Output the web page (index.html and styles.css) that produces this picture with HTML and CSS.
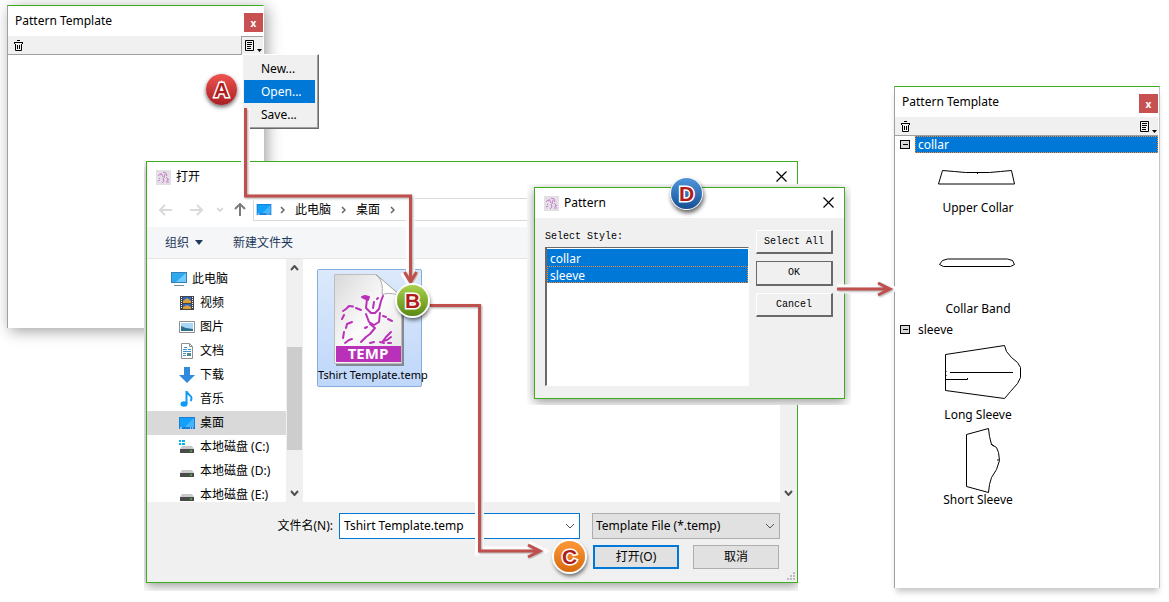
FILE: index.html
```html
<!DOCTYPE html>
<html lang="zh-CN">
<head>
  <meta charset="UTF-8" />
  <title>Pattern Template</title>
  <link rel="stylesheet" href="styles.css">
</head>
<body>
  <!-- shared icons -->
  <svg class="sprite" width="0" height="0" aria-hidden="true">
    <symbol id="i-trash" viewBox="0 0 11 11">
      <path d="M1 2.500h9M4 .5h3M2.500 4v6.500h6V4M4.500 5v4M6.500 5v4M1.500 2v2M9.500 2v2" fill="none" stroke="#000"/>
    </symbol>
    <symbol id="i-list" viewBox="0 0 18 13">
      <path d="M1.500 1.500h8v10h-8zM3 3.500h5M3 5.500h5M3 7.500h4M3 9.500h4" fill="none" stroke="#000"/>
      <path d="M13 10h5l-2.500 3z"/>
    </symbol>
    <symbol id="i-close" viewBox="0 0 11 11">
      <path d="M.5.5l10 10M10.500.5l-10 10" fill="none" stroke="#000" stroke-width="1.200"/>
    </symbol>
    <symbol id="i-app" viewBox="0 0 15 15">
      <path d="M0 0h15v15H0z" fill="#e2e0e4"/>
      <path d="M2 11l2-1M2 6l2-2 1 1M4 8l-1 1M5 3l2 4M7 2l3 1 1 3M9 4l-1 4M7 8l1 3-2 2M10 7l2 2-1 2M10 12h3M12 9l1 1" fill="none" stroke="#cb7dd0"/>
    </symbol>
    <symbol id="i-chev" viewBox="0 0 5 8">
      <path d="M1 1l3 3-3 3" fill="none" stroke="#666" stroke-width="1.500"/>
    </symbol>
    <symbol id="i-desktop" viewBox="0 0 16 12">
      <path d="M0 0h16v12H0z" fill="#1a7fd4"/>
      <path d="M1 1h14v9H1z" fill="#12a0fb"/>
      <path d="M15 1v9H6z" fill="#45b5ff"/>
      <path d="M1 11h2M11 11h1M13 11h1" stroke="#fff"/>
    </symbol>
    <symbol id="i-disk" viewBox="0 0 16 16">
      <path d="M3 7h10l2 3H1z" fill="#c9c9c9"/>
      <path d="M1 10h14v4H1z" fill="#4a4a4a"/>
      <path d="M11 12h2" stroke="#3df03d"/>
    </symbol>
  </svg>

  <main class="desktop">
    <section class="window panel panel-empty">
      <header class="panel-title">
        <h2>Pattern Template</h2>
        <button class="panel-close" aria-label="Close">x</button>
      </header>
      <div class="panel-tools">
        <button class="tool" aria-label="Delete"><svg width="11" height="11"><use href="#i-trash"/></svg></button>
        <button class="tool tool-menu pressed" aria-label="Menu"><svg width="18" height="13"><use href="#i-list"/></svg></button>
      </div>
      <div class="panel-body"></div>
    </section>

    <div class="popup" role="menu">
      <button role="menuitem">New...</button>
      <button role="menuitem" class="active">Open...</button>
      <button role="menuitem">Save...</button>
    </div>

    <div class="frame frame-open">
      <section class="window dialog">
        <header class="dialog-title">
          <svg width="15" height="15"><use href="#i-app"/></svg>
          <h2>打开</h2>
          <button class="dialog-close" aria-label="Close"><svg width="11" height="11"><use href="#i-close"/></svg></button>
        </header>

        <nav class="address-row">
          <button class="nav-btn" aria-label="Back"><svg width="14" height="12" viewBox="0 0 14 12"><path d="M13 6H1M6 1L1 6l5 5" fill="none" stroke="#dadada" stroke-width="2"/></svg></button>
          <button class="nav-btn" aria-label="Forward"><svg width="14" height="12" viewBox="0 0 14 12"><path d="M1 6h12M8 1l5 5-5 5" fill="none" stroke="#dadada" stroke-width="2"/></svg></button>
          <button class="nav-btn" aria-label="Recent"><svg width="6" height="5" viewBox="0 0 6 5"><path d="M0 1l3 3 3-3" fill="none" stroke="#cfcfcf" stroke-width="1.500"/></svg></button>
          <button class="nav-btn" aria-label="Up"><svg width="12" height="13" viewBox="0 0 12 13"><path d="M6 13V1M1 6l5-5 5 5" fill="none" stroke="#7b7b7b" stroke-width="2"/></svg></button>
          <div class="address">
            <svg width="16" height="11"><use href="#i-desktop"/></svg>
            <svg width="5" height="8"><use href="#i-chev"/></svg>
            <a href="#pc">此电脑</a>
            <svg width="5" height="8"><use href="#i-chev"/></svg>
            <a href="#desktop">桌面</a>
            <svg width="5" height="8"><use href="#i-chev"/></svg>
          </div>
        </nav>

        <div class="commands">
          <button>组织 <svg width="8" height="5" viewBox="0 0 8 5"><path d="M0 0h8L4 5z" fill="#1e395b"/></svg></button>
          <button>新建文件夹</button>
        </div>

        <div class="browser">
          <ul class="tree">
            <li class="root"><a href="#pc">
              <svg width="16" height="16" viewBox="0 0 16 16"><path d="M0 1h16v11H0z" fill="#3580b5"/><path d="M1 2h14v9H1z" fill="#2fa9ee"/><path d="M15 2v9H5z" fill="#71caff"/><path d="M3 14.500h10" stroke="#6d8da3"/></svg>
              此电脑</a></li>
            <li><a href="#videos">
              <svg width="16" height="16" viewBox="0 0 16 16"><path d="M1 1h14v14H1z" fill="#444"/><path d="M4 2h8v6H4z" fill="#2f67c8"/><path d="M4 9h8v5H4z" fill="#2f67c8"/><path d="M4 6l4-3 4 3v2H4zM4 12l4-2 4 2v2H4z" fill="#d8a03a"/><path d="M2.500 2v12M13.500 2v12" stroke="#fff" stroke-dasharray="1 1"/></svg>
              视频</a></li>
            <li><a href="#pictures">
              <svg width="16" height="16" viewBox="0 0 16 16"><path d="M.5 2.500h15v11H.5z" fill="#fff" stroke="#8f8f8f"/><path d="M2 4h12v8H2z" fill="#a9d6f5"/><path d="M2 7l5 2 7 1v2H2z" fill="#2d6f8f"/></svg>
              图片</a></li>
            <li><a href="#documents">
              <svg width="16" height="16" viewBox="0 0 16 16"><path d="M2.500.5h8l3 3v12h-11z" fill="#fff" stroke="#8f8f8f"/><path d="M10.500.5v3h3" fill="none" stroke="#8f8f8f"/><path d="M4 6.500h4M9 6.500h3M4 8.500h8M4 10.500h3M4 12.500h3M5 4.500h3" stroke="#3b92d2"/><path d="M8 10h4v3H8z" fill="#4e8a8a"/></svg>
              文档</a></li>
            <li><a href="#downloads">
              <svg width="16" height="16" viewBox="0 0 16 16"><path d="M5 0h6v8h5l-8 8-8-8h5z" fill="#2f8ade"/></svg>
              下载</a></li>
            <li><a href="#music">
              <svg width="16" height="16" viewBox="0 0 16 16"><ellipse cx="5" cy="13" rx="3.500" ry="2.700" fill="#0f9bf5"/><path d="M7.500 13V0c1 4 5 4 5 7 0 2-1 3-1 3" fill="none" stroke="#0f9bf5" stroke-width="2"/></svg>
              音乐</a></li>
            <li class="selected"><a href="#desktop">
              <svg width="16" height="12"><use href="#i-desktop"/></svg>
              桌面</a></li>
            <li class="disk"><a href="#c">
              <svg width="16" height="16" viewBox="0 0 16 16"><use href="#i-disk"/><path d="M0 1h2v2H0zM3 1h3v2H3zM0 4h2v2H0zM3 4h3v2H3z" fill="#00b4f0"/></svg>
              本地磁盘 (C:)</a></li>
            <li class="disk"><a href="#d"><svg width="16" height="16"><use href="#i-disk"/></svg>本地磁盘 (D:)</a></li>
            <li class="disk"><a href="#e"><svg width="16" height="16"><use href="#i-disk"/></svg>本地磁盘 (E:)</a></li>
          </ul>
          <div class="scrollbar">
            <svg width="9" height="6" viewBox="0 0 9 6"><path d="M1 5l3.500-4L8 5" fill="none" stroke="#505050" stroke-width="2"/></svg>
            <span class="thumb"></span>
            <svg width="9" height="6" viewBox="0 0 9 6"><path d="M1 1l3.500 4L8 1" fill="none" stroke="#505050" stroke-width="2"/></svg>
          </div>
          <div class="files">
            <a class="file" href="#template">
              <svg width="72" height="92" viewBox="0 0 72 92">
                <defs>
                  <linearGradient id="paper" x1="0" y1="0" x2="1" y2="1">
                    <stop offset="0" stop-color="#d9d9d9"/><stop offset=".5" stop-color="#fbfbfb"/><stop offset="1" stop-color="#e3e3e3"/>
                  </linearGradient>
                </defs>
                <path d="M2 3h41l27 22v67H2z" fill="#666" opacity=".7"/>
                <path d="M.5.5H42L67.500 22v67.500H.5z" fill="url(#paper)" stroke="#bdbdbd"/>
                <path d="M42 .5c6 5 7 12 6 20 7-2 14-1 19.500 2z" fill="#fff" stroke="#aaa"/>
                <g fill="none" stroke="#b930b9" stroke-width="2" stroke-linecap="round" stroke-linejoin="round">
                  <path d="M28 23l3-1 4 1-1 3z" fill="#b930b9"/>
                  <path d="M33 25l-1 9 5 5h4l4-4 2-8 2-5M40 28l-1 6M43 25l1-1"/>
                  <path d="M9 37l3-2 3-3 4 .5M22 34l5 2M32 40l3 8 5 3 5-3 1-9M49 42l3 1M54 45l4 2"/>
                  <path d="M36 50l5 4-5 6-4 3-5 5M10 41l-2 4M18 48l-5 2-1 4M31 54l2-1M10 58l-1 6M18 65l-3 1-4 3"/>
                  <path d="M57 58l-5 5-3 4 4-1 4-3M36 69l4-1M46 68l4 1M54 69h3"/>
                </g>
                <path d="M2 72h65v16H2z" fill="#b930b9"/>
                <text x="34" y="85" class="file-ext">TEMP</text>
              </svg>
              <span>Tshirt Template.temp</span>
            </a>
          </div>
          <div class="scrollbar scrollbar-end">
            <svg width="9" height="6" viewBox="0 0 9 6"><path d="M1 1l3.500 4L8 1" fill="none" stroke="#505050" stroke-width="2"/></svg>
          </div>
        </div>

        <form class="dialog-foot">
          <label for="filename">文件名(N):</label>
          <div class="combo combo-name">
            <input id="filename" type="text" value="Tshirt Template.temp">
            <svg width="10" height="6" viewBox="0 0 10 6"><path d="M1 1l4 4 4-4" fill="none" stroke="#555"/></svg>
          </div>
          <div class="combo combo-type">
            <select aria-label="File type"><option>Template File (*.temp)</option></select>
            <svg width="10" height="6" viewBox="0 0 10 6"><path d="M1 1l4 4 4-4" fill="none" stroke="#555"/></svg>
          </div>
          <div class="foot-actions">
            <button type="button" class="btn btn-default">打开(O)</button>
            <button type="button" class="btn">取消</button>
          </div>
          <svg class="grip" width="9" height="9" viewBox="0 0 9 9"><path d="M7 0h2v2H7zM7 3h2v2H7zM4 3h2v2H4zM7 6h2v2H7zM4 6h2v2H4zM1 6h2v2H1z" fill="#bcbcbc"/></svg>
        </form>
      </section>
    </div>

    <div class="frame frame-pattern">
      <section class="window dialog">
        <header class="dialog-title">
          <svg width="15" height="15"><use href="#i-app"/></svg>
          <h2>Pattern</h2>
          <button class="dialog-close" aria-label="Close"><svg width="11" height="11"><use href="#i-close"/></svg></button>
        </header>
        <div class="pattern-body">
          <div class="style-field">
            <label for="styles">Select Style:</label>
            <select id="styles" multiple size="2">
              <option selected>collar</option>
              <option selected class="current">sleeve</option>
            </select>
          </div>
          <div class="pattern-actions">
            <button>Select All</button>
            <button class="default">OK</button>
            <button>Cancel</button>
          </div>
        </div>
      </section>
    </div>

    <section class="window panel panel-full">
      <header class="panel-title">
        <h2>Pattern Template</h2>
        <button class="panel-close" aria-label="Close">x</button>
      </header>
      <div class="panel-tools">
        <button class="tool" aria-label="Delete"><svg width="11" height="11"><use href="#i-trash"/></svg></button>
        <button class="tool tool-menu" aria-label="Menu"><svg width="18" height="13"><use href="#i-list"/></svg></button>
      </div>
      <div class="panel-body">
        <div class="group">
          <button class="toggle" aria-label="Collapse collar"></button>
          <span class="group-name selected">collar</span>
        </div>
        <figure>
          <svg width="90" height="45" viewBox="0 0 90 45"><path d="M9.500 16.500l12 1 11 1h24l11-1 11-1 3 13.500h-76zM44.500 18v2" /></svg>
          <figcaption>Upper Collar</figcaption>
        </figure>
        <figure>
          <svg width="90" height="83" viewBox="0 0 90 83"><path d="M6.500 47.500l3-4 5-1.500h60l5 1.500 2 4-4 2h-67z"/></svg>
          <figcaption>Collar Band</figcaption>
        </figure>
        <div class="group">
          <button class="toggle" aria-label="Collapse sleeve"></button>
          <span class="group-name">sleeve</span>
        </div>
        <figure>
          <svg width="90" height="67" viewBox="0 0 90 67"><path d="M12.500 15.500l59-9 2 6 5 6 6 5 3 5v10l-3 6-7 8-6 7-59-8zM17 33.500h63M12.500 40.500h22v-1.500M13 32v1M13 36v1"/></svg>
          <figcaption>Long Sleeve</figcaption>
        </figure>
        <figure>
          <svg width="90" height="67" viewBox="0 0 90 67"><path d="M33.500 10.500l22-6 1 8 2 8 5 3 2 5 1 8-3 9-5 8-2 7-1 8-22-6zM58 20l3 2M64 36h2"/></svg>
          <figcaption>Short Sleeve</figcaption>
        </figure>
      </div>
    </section>

    <!-- step arrows -->
    <svg class="arrows" width="1169" height="602" viewBox="0 0 1169 602" aria-hidden="true">
      <defs>
        <g id="step-lines">
          <path d="M245.500 108v88h165v86M404.500 272l6 10 6-10"/>
          <path d="M430 305.500h49.500v245.500h60M528 545l12 6-12 6"/>
          <path d="M837 289h52M878 283l12 6-12 6"/>
        </g>
      </defs>
      <use href="#step-lines" class="arrow-halo"/>
      <use href="#step-lines" class="arrow-line"/>
    </svg>

    <span class="badge badge-a">A</span>
    <span class="badge badge-b">B</span>
    <span class="badge badge-c">C</span>
    <span class="badge badge-d">D</span>
  </main>
</body>
</html>
```
FILE: styles.css
```css
:root {
  --green: #3cac1e;
  --blue: #0078d7;
  --face: #f0f0f0;
  --grey-line: #a0a0a0;
  --arrow: #c0504d;
  --ui-font: "Noto Sans", "Noto Sans CJK SC", sans-serif;
}

* {
  box-sizing: border-box;
}

body {
  margin: 0;
  background: #fff;
  color: #000;
  font-family: var(--ui-font);
  font-size: 12px;
  line-height: 18px;
}

h2,
ul,
figure {
  margin: 0;
  padding: 0;
  font-size: 12px;
  font-weight: 400;
}

button,
input,
select {
  margin: 0;
  padding: 0;
  border: none;
  border-radius: 0;
  background: none;
  color: inherit;
  font: inherit;
}

a {
  color: inherit;
  text-decoration: none;
}

svg {
  display: block;
  flex: none;
}

.sprite {
  position: absolute;
}

.desktop {
  position: relative;
  min-height: 100vh;
  overflow: hidden;
}

/* docked panels */
.panel {
  position: absolute;
  background: #fff;
  border-top: 1px solid var(--green);
  border-left: 1px solid var(--grey-line);
}

.panel-empty {
  left: 7px;
  top: 5px;
  width: 257px;
  border-right: 1px solid #fff;
  box-shadow: 3px 3px 14px rgba(0, 0, 0, 0.38);
}

.panel-empty .panel-body {
  min-height: 273px;
}

.panel-full {
  left: 894px;
  top: 86px;
  width: 266px;
  padding-right: 1px;
  border-right: 1px solid #c4c4c4;
  box-shadow: 0 6px 6px -2px rgba(0, 0, 0, 0.22);
}

.panel-full .panel-body {
  min-height: 452px;
}

.panel-title {
  display: flex;
  align-items: center;
  justify-content: space-between;
  height: 30px;
  padding-left: 7px;
}

.panel-close {
  align-self: flex-end;
  width: 19px;
  height: 19px;
  margin-bottom: 4px;
  background: #c75050;
  color: #fff;
  font-size: 10px;
  font-weight: 700;
  line-height: 16px;
}

.panel-tools {
  display: flex;
  justify-content: space-between;
  height: 19px;
  background: var(--face);
  border-bottom: 1px solid var(--grey-line);
}

.tool {
  padding: 0 5px;
}

.tool-menu {
  padding: 0 1px 0 2px;
}

.tool-menu.pressed {
  border-top: 1px solid var(--grey-line);
  border-left: 1px solid var(--grey-line);
}

/* popup menu */
.popup {
  position: absolute;
  left: 242px;
  top: 54px;
  width: 77px;
  padding: 2px 3px 2px 1px;
  background: var(--face);
  border: 1px solid #fff;
  border-right: 1px solid #696969;
  border-bottom: 1px solid #696969;
  box-shadow: inset -1px -1px 0 var(--grey-line);
}

.popup button {
  display: block;
  width: 100%;
  height: 23px;
  padding-left: 17px;
  text-align: left;
}

.popup .active {
  background: var(--blue);
  color: #fff;
}

/* dialogs */
.frame {
  position: absolute;
  overflow: hidden;
  background: #fff;
}

.frame-open {
  left: 144px;
  top: 161px;
  width: 654px;
  padding: 0 0 8px 2px;
}

.frame-pattern {
  left: 527px;
  top: 184px;
  width: 324px;
  padding: 3px 6px 6px 7px;
}

.dialog {
  border: 1px solid var(--green);
  background: #fff;
  box-shadow: 0 3px 10px rgba(0, 0, 0, 0.4);
}

.dialog-title {
  display: flex;
  align-items: center;
  height: 30px;
  padding: 0 10px 0 9px;
}

.dialog-title h2 {
  flex: 1;
  padding-left: 5px;
}

.dialog-close {
  padding-bottom: 2px;
}

.address-row {
  display: flex;
  align-items: center;
  height: 35px;
  padding-left: 12px;
}

.nav-btn {
  margin-right: 16px;
}

.nav-btn:nth-child(2) {
  margin-right: 14px;
}

.nav-btn:nth-child(3) {
  margin-right: 11px;
}

.nav-btn:nth-child(4) {
  margin-right: 7px;
}

.address {
  display: flex;
  flex: 1;
  align-items: center;
  gap: 10px;
  height: 23px;
  padding-left: 2px;
  border: 1px solid #d9d9d9;
}

.address svg:nth-child(2) {
  margin-left: -2px;
}

.commands {
  display: flex;
  gap: 30px;
  height: 32px;
  padding-left: 18px;
  background: #f5f6f7;
  border-bottom: 1px solid #e5e5e5;
  color: #1e395b;
}

.commands button {
  display: flex;
  align-items: center;
  gap: 6px;
}

.browser {
  display: flex;
  height: 243px;
  overflow: hidden;
}

.tree {
  width: 139px;
  padding-top: 8px;
  list-style: none;
}

.tree a {
  display: flex;
  align-items: center;
  gap: 5px;
  height: 24px;
  padding-left: 32px;
  white-space: nowrap;
}

.tree .root a {
  padding-left: 24px;
}

.tree .selected {
  background: #d9d9d9;
}

.scrollbar {
  display: flex;
  flex-direction: column;
  align-items: center;
  width: 17px;
  padding: 6px 0;
  background: var(--face);
}

.thumb {
  width: 15px;
  height: 103px;
  margin: 76px 0 auto;
  background: #cdcdcd;
}

.scrollbar-end {
  justify-content: flex-end;
}

.files {
  flex: 1;
  padding: 10px 14px;
}

.file {
  display: flex;
  flex-direction: column;
  align-items: center;
  width: 105px;
  padding: 4px 0 2px;
  border: 1px solid #84acdd;
  border-radius: 2px;
  background: linear-gradient(#dce9fb, #bfd7fa);
  font-size: 11px;
}

.file span {
  align-self: flex-start;
  white-space: nowrap;
}

.file-ext {
  fill: #fff;
  font: 700 15px "Open Sans", sans-serif;
  text-anchor: middle;
}

.dialog-foot {
  display: grid;
  grid-template-columns: 186px 1fr 188px;
  gap: 6px 0;
  padding: 11px 17px 13px 0;
  background: var(--face);
  position: relative;
}

.dialog-foot label {
  align-self: center;
  text-align: right;
}

.combo {
  display: flex;
  align-items: center;
  height: 26px;
  padding-right: 4px;
  border: 1px solid #adadad;
}

.combo input,
.combo select {
  flex: 1;
  min-width: 0;
  padding-left: 4px;
  appearance: none;
  outline: none;
}

.combo-name {
  margin: 0 12px 0 6px;
  background: #fff;
  border-color: var(--blue);
}

.combo-type {
  background: #e1e1e1;
}

.combo-type select {
  padding-left: 3px;
}

.foot-actions {
  display: flex;
  grid-column: 1 / -1;
  justify-content: flex-end;
  gap: 14px;
  padding-right: 1px;
}

.btn {
  width: 86px;
  height: 24px;
  border: 1px solid #adadad;
  background: #e1e1e1;
}

.btn-default {
  border: 2px solid var(--blue);
}

.grip {
  position: absolute;
  right: 2px;
  bottom: 1px;
}

/* style picker */
.pattern-body {
  display: flex;
  gap: 7px;
  padding: 9px 11px 12px 10px;
  background: var(--face);
  font: 10px/20px "Liberation Mono", monospace;
}

.style-field {
  display: flex;
  flex: 1;
  flex-direction: column;
}

.style-field label {
  height: 20px;
}

.style-field select {
  height: 139px;
  padding-top: 1px;
  border: 1px solid #fff;
  border-top-color: #696969;
  border-left: 2px solid #696969;
  background: #fff;
  outline: none;
  overflow: hidden;
  font-family: var(--ui-font);
  font-size: 12px;
}

.style-field option {
  height: 17px;
  min-height: 17px;
  padding: 0 2px;
  border: 1px solid var(--blue);
  line-height: 15px;
}

.style-field option:checked {
  background: linear-gradient(var(--blue), var(--blue));
  -webkit-text-fill-color: #fff;
}

.style-field .current {
  border: 1px dotted #ff8728;
}

.pattern-actions {
  display: flex;
  flex-direction: column;
  gap: 7px;
  width: 77px;
  padding-top: 3px;
}

.pattern-actions button {
  height: 24px;
  border: 1px solid #fff;
  border-right: 2px solid #696969;
  border-bottom: 2px solid #696969;
}

.pattern-actions .default {
  height: 25px;
  border-top: 1px solid #696969;
  border-left: 1px solid #696969;
}

/* tree of pieces */
.group {
  display: flex;
  align-items: center;
  gap: 5px;
  height: 17px;
  padding-left: 5px;
}

figure + .group {
  margin: 3px 0 0;
}

.toggle {
  width: 10px;
  height: 9px;
  border: 1px solid #000;
  background: linear-gradient(#000, #000) center / 5px 1px no-repeat, #d8d8d8;
}

.group-name {
  flex: 1;
  padding: 0 2px;
  border: 1px solid transparent;
  line-height: 15px;
}

.group-name.selected {
  border: 1px dotted #ff8728;
  background: var(--blue);
  color: #fff;
}

figure {
  width: 90px;
  margin-left: 38px;
  text-align: center;
}

figure svg {
  overflow: visible;
}

.group + figure {
  padding-top: 1px;
}

figure path {
  fill: none;
  stroke: #000;
}

/* callouts */
.arrows {
  position: absolute;
  left: 0;
  top: 0;
  fill: none;
  pointer-events: none;
}

.arrow-halo {
  stroke: #fff;
  stroke-width: 9px;
}

.arrow-line {
  stroke: var(--arrow);
  stroke-width: 3px;
  filter: drop-shadow(1px 1px 1px rgba(0, 0, 0, 0.35));
}

.badge {
  position: absolute;
  width: 31px;
  height: 31px;
  border-radius: 50%;
  box-shadow: 0 0 0 2px #fff, 1px 3px 4px 1px rgba(0, 0, 0, 0.6);
  color: #b01c1c;
  font: 700 21px/31px "Liberation Sans", sans-serif;
  text-align: center;
  -webkit-text-stroke: 3px #fff;
  paint-order: stroke fill;
}

.badge-a {
  left: 206px;
  top: 74px;
  background: linear-gradient(#ef5350, #a81f22);
  box-shadow: 0 2px 4px rgba(0, 0, 0, 0.6);
}

.badge-b {
  left: 397px;
  top: 285px;
  background: linear-gradient(#a9d14b, #5a8a14);
}

.badge-c {
  left: 554px;
  top: 541px;
  background: linear-gradient(#ff9838, #d96a0c);
}

.badge-d {
  left: 671px;
  top: 178px;
  background: linear-gradient(#4f96dc, #164f96);
  box-shadow: 0 0 0 1px #fff, 1px 3px 4px 1px rgba(0, 0, 0, 0.6);
}
```
